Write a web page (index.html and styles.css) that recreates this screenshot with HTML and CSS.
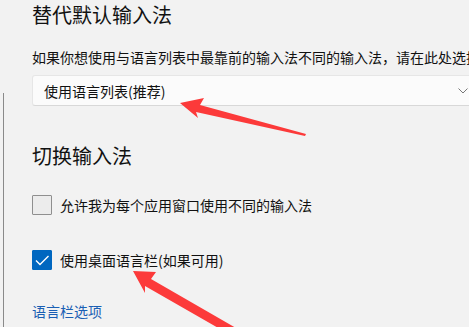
FILE: index.html
```html
<!DOCTYPE html>
<html lang="zh-CN">
<head>
<meta charset="utf-8">
<link rel="stylesheet" href="styles.css">
</head>
<body>
<div class="page">
  <div class="edge"></div>
  <main class="content">
    <h2 class="title">替代默认输入法</h2>
    <p class="desc">如果你想使用与语言列表中最靠前的输入法不同的输入法，请在此处选择</p>
    <div class="select">
      <span>使用语言列表(推荐)</span>
      <svg class="chev" width="10" height="6" viewBox="0 0 10 6"><polyline points="0.5,0.5 5,5 9.5,0.5" fill="none" stroke="#777" stroke-width="1"/></svg>
    </div>
    <h2 class="title title2">切换输入法</h2>
    <label class="check">
      <span class="box"></span>
      <span>允许我为每个应用窗口使用不同的输入法</span>
    </label>
    <label class="check check2">
      <span class="box on"><svg width="20" height="20" viewBox="0 0 20 20"><polyline points="4,10.5 8,14.5 16.5,6" fill="none" stroke="#fff" stroke-width="1.4"/></svg></span>
      <span>使用桌面语言栏(如果可用)</span>
    </label>
    <a class="link">语言栏选项</a>
  </main>
  <svg class="arrows" width="469" height="327" viewBox="0 0 469 327">
    <polygon fill="#fc3a3a" points="180,103 204,98 200,105 306,134 305,136 196,112 198,118"/>
    <polygon fill="#fc3a3a" points="133,271 156,272 151,279 236,328 227,333 145,286 145,293"/>
  </svg>
</div>
</body>
</html>
```
FILE: styles.css
```css
html, body {
  margin: 0;
  padding: 0;
  background: #f2f2f2;
  overflow: hidden;
}
.page {
  position: relative;
  width: 469px;
  height: 327px;
  overflow: hidden;
  font-family: "Noto Sans CJK SC", "Noto Sans", sans-serif;
  color: #111;
}
.edge {
  position: absolute;
  left: 3px;
  top: 93px;
  bottom: 0;
  width: 1px;
  background: #8a8a8a;
}
.content {
  display: flex;
  flex-direction: column;
  align-items: flex-start;
  padding-left: 32px;
}
.title {
  margin: 0;
  margin-top: 1px;
  font-size: 20px;
  font-weight: 400;
  line-height: 28px;
}
.desc {
  margin: 18px 0 0;
  font-size: 14px;
  line-height: 20px;
  white-space: nowrap;
}
.select {
  margin-top: 8px;
  box-sizing: border-box;
  width: 448px;
  height: 31px;
  flex-shrink: 0;
  background: #fbfbfb;
  border: 1px solid #e6e6e6;
  border-bottom-color: #d8d8d8;
  border-radius: 3px;
  display: flex;
  align-items: center;
  justify-content: space-between;
  padding: 0 11px 0 11px;
  font-size: 14px;
}
.chev { margin-top: 1px; }
.title2 { margin-top: 36px; }
.check {
  display: flex;
  align-items: center;
  gap: 8px;
  font-size: 14px;
  line-height: 20px;
  margin-top: 25px;
}
.check2 { margin-top: 35px; }
.box {
  box-sizing: border-box;
  width: 20px;
  height: 20px;
  border: 1px solid #8f8f8f;
  background: #ececec;
  border-radius: 1px;
}
.box.on {
  background: #0067c0;
  border-color: #0067c0;
}
.box.on svg { display: block; margin: -1px; }
.link {
  margin-top: 31px;
  font-size: 14px;
  line-height: 20px;
  color: #1a5fb4;
}
.arrows {
  position: absolute;
  left: 0;
  top: 0;
}
```
